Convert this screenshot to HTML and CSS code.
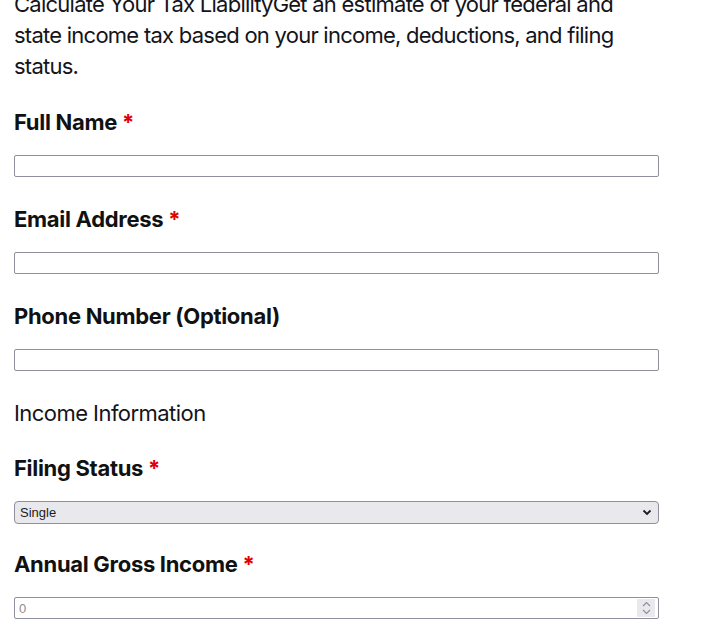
FILE: index.html
```html
<!DOCTYPE html>
<html lang="en">
<head>
    <meta charset="UTF-8">
    <meta name="viewport" content="width=device-width, initial-scale=1.0">
    <title>Tax Liability Calculator</title>
    <link rel="stylesheet" href="styles.css">
</head>
<body>
    <div class="page">
        <p class="intro">Calculate Your Tax LiabilityGet an estimate of your federal and state income tax based on your income, deductions, and filing status.</p>

        <form class="tax-form">
            <div class="field">
                <label for="name">Full Name <span class="req">*</span></label>
                <input type="text" id="name" name="name" class="text-input">
            </div>

            <div class="field">
                <label for="email">Email Address <span class="req">*</span></label>
                <input type="email" id="email" name="email" class="text-input">
            </div>

            <div class="field">
                <label for="phone">Phone Number (Optional)</label>
                <input type="tel" id="phone" name="phone" class="text-input">
            </div>

            <h3 class="section-title">Income Information</h3>

            <div class="field field-select">
                <label for="status">Filing Status <span class="req">*</span></label>
                <div class="select-wrap">
                    <select id="status" name="status" class="select-input">
                        <option value="single">Single</option>
                        <option value="married-joint">Married Filing Jointly</option>
                        <option value="married-separate">Married Filing Separately</option>
                        <option value="head">Head of Household</option>
                    </select>
                    <svg class="select-arrow" width="10" height="7" viewBox="0 0 10 7"><path d="M1.5 1.5 L5 5 L8.5 1.5" fill="none" stroke="#1c1b22" stroke-width="1.8"/></svg>
                </div>
            </div>

            <div class="field">
                <label for="income">Annual Gross Income <span class="req">*</span></label>
                <div class="number-wrap">
                    <input type="number" id="income" name="income" class="text-input number-input" placeholder="0">
                    <span class="spinner">
                        <svg width="9" height="6" viewBox="0 0 9 6"><path d="M1 5 L4.5 1.5 L8 5" fill="none" stroke="#8f8f9d" stroke-width="1.2"/></svg>
                        <svg width="9" height="6" viewBox="0 0 9 6"><path d="M1 1 L4.5 4.5 L8 1" fill="none" stroke="#8f8f9d" stroke-width="1.2"/></svg>
                    </span>
                </div>
            </div>
        </form>
    </div>
</body>
</html>
```

FILE: styles.css
```css
body {
    margin: 0;
    padding: 0;
    background: #fff;
    color: #14141a;
    font-family: Inter, "Open Sans", sans-serif;
}
.page {
    padding: 0 14px;
    width: 645px;
}
.intro {
    margin: -11px 0 25px;
    font-size: 22px;
    line-height: 31px;
    font-weight: 400;
    letter-spacing: -0.75px;
}
.field {
    margin-bottom: 27px;
}
.field-select {
    margin-bottom: 25px;
}
label {
    display: block;
    font-size: 22px;
    line-height: 30px;
    font-weight: 700;
    letter-spacing: -0.3px;
    margin-bottom: 18px;
    color: #111;
}
.req {
    color: #e00000;
}
.text-input,
.select-input {
    display: block;
    box-sizing: border-box;
    width: 645px;
    height: 22px;
    margin: 0;
    padding: 0 4px;
    border: 1px solid #8f8f9d;
    border-radius: 2px;
    background: #fff;
    font-family: "Liberation Sans", Arial, sans-serif;
    font-size: 13px;
    color: #1c1b22;
}
.text-input:focus,
.select-input:focus {
    outline: none;
    border-color: #6a6a7a;
}
.section-title {
    margin: 0 0 25px;
    font-size: 22px;
    line-height: 30px;
    font-weight: 400;
    letter-spacing: -0.55px;
}
.select-wrap,
.number-wrap {
    position: relative;
    width: 645px;
}
.select-input {
    -webkit-appearance: none;
    appearance: none;
    height: 23px;
    padding: 0 24px 0 5px;
    background: #e9e9ed;
    border-radius: 4px;
}
.select-arrow {
    position: absolute;
    right: 7px;
    top: 8px;
    pointer-events: none;
}
.number-input {
    -moz-appearance: textfield;
    padding-left: 4px;
}
.number-input::-webkit-inner-spin-button,
.number-input::-webkit-outer-spin-button {
    -webkit-appearance: none;
    margin: 0;
}
.number-input::placeholder {
    color: #8d8d8d;
}
.spinner {
    position: absolute;
    right: 4px;
    top: 2px;
    width: 18px;
    height: 18px;
    background: #e9e9ed;
    display: flex;
    flex-direction: column;
    align-items: center;
    justify-content: center;
    gap: 2px;
    pointer-events: none;
}
.spinner svg {
    display: block;
}
```
